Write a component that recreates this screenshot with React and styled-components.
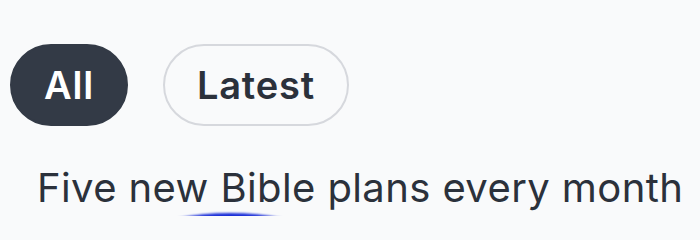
import React, { useState } from "react";
import styled, { createGlobalStyle } from "styled-components";

const FILTERS = ["All", "Latest"];

const App = () => {
  const [active, setActive] = useState("All");

  return (
    <>
      <GlobalStyle />
      <Page>
        <FilterRow>
          {FILTERS.map((name) => (
            <Pill key={name} active={active === name} onClick={() => setActive(name)}>
              {name}
            </Pill>
          ))}
        </FilterRow>
        <Heading>Five new Bible plans every month</Heading>
        <Glow />
      </Page>
    </>
  );
};

export default App;

const GlobalStyle = createGlobalStyle`
  html, body {
    margin: 0;
    padding: 0;
    background: #f9fafb;
  }
  body {
    font-family: Inter, "Noto Sans", sans-serif;
    color: #2b313b;
  }
`;

const Page = styled.div`
  position: relative;
  width: 700px;
  height: 216px;
  overflow: hidden;
  padding: 44px 0 0 10px;
  box-sizing: border-box;
`;

const FilterRow = styled.div`
  display: flex;
  align-items: center;
  gap: 35px;
`;

const Pill = styled.button`
  height: 82px;
  padding: 0 32px;
  border-radius: 41px;
  font-family: inherit;
  font-size: 38px;
  font-weight: 600;
  letter-spacing: 0.8px;
  cursor: pointer;
  box-sizing: border-box;
  border: 2px solid ${({ active }) => (active ? "#333a46" : "#d6d8dd")};
  background: ${({ active }) => (active ? "#333a46" : "transparent")};
  color: ${({ active }) => (active ? "#ffffff" : "#2b313b")};
`;

const Heading = styled.h2`
  margin: 38px 0 0 27px;
  font-size: 40px;
  font-weight: 400;
  line-height: 48px;
  letter-spacing: 0.4px;
  white-space: nowrap;
`;

const Glow = styled.div`
  position: absolute;
  left: 160px;
  top: 213px;
  width: 140px;
  height: 30px;
  border-radius: 50%;
  background: #1b2fd8;
  filter: blur(1px);
`;
